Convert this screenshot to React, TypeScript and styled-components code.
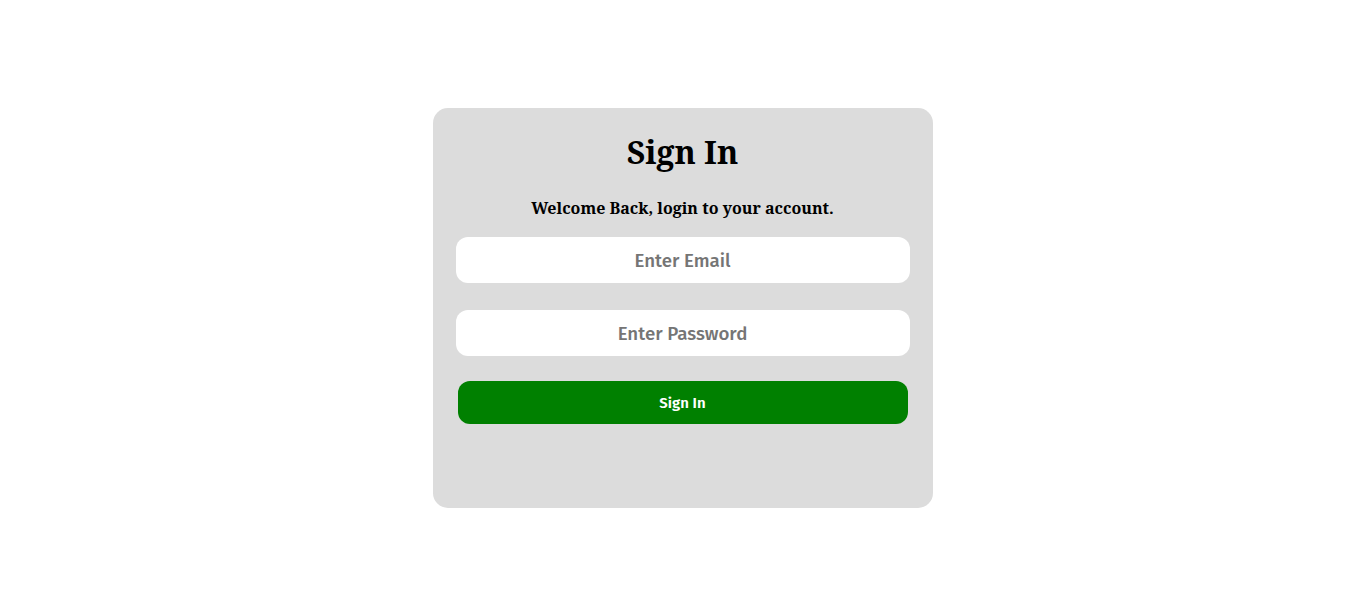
import React from "react";
import styled, { createGlobalStyle } from "styled-components";

const Global = createGlobalStyle`
  html, body { margin: 0; padding: 0; background: #ffffff; }
  body { font-family: "Noto Serif", "DejaVu Serif", serif; }
`;

const Page = styled.div`
  display: flex;
  justify-content: center;
  padding-top: 108px;
  width: 1365px;
  height: 602px;
  box-sizing: border-box;
`;

const Card = styled.form`
  width: 500px;
  height: 400px;
  box-sizing: border-box;
  background: #dcdcdc;
  border-radius: 15px;
  padding: 24px 23px 0;
  display: flex;
  flex-direction: column;
  align-items: stretch;
`;

const Title = styled.h1`
  margin: 0;
  font-family: "Noto Serif", "DejaVu Serif", serif;
  font-size: 32px;
  line-height: 40px;
  font-weight: 700;
  text-align: center;
  color: #000;
`;

const Subtitle = styled.p`
  margin: 24px 0 0;
  font-family: "Noto Serif", "DejaVu Serif", serif;
  font-size: 16px;
  line-height: 24px;
  font-weight: 700;
  text-align: center;
  color: #000;
`;

const Input = styled.input<{ $top: number }>`
  margin-top: ${(p) => p.$top}px;
  height: 46px;
  box-sizing: border-box;
  border: none;
  border-radius: 12px;
  background: #ffffff;
  outline: none;
  text-align: center;
  padding: 2px 0 0;
  font-family: "Fira Sans", "Noto Sans", "Open Sans", sans-serif;
  font-size: 18.7px;
  font-weight: 500;
  &::placeholder { color: #757575; }
`;

const Button = styled.button`
  margin: 25px 2px 0;
  height: 43px;
  padding: 1px 0 0;
  border: none;
  border-radius: 12px;
  background: #008000;
  color: #ffffff;
  font-family: "Fira Sans", "Noto Sans", "Open Sans", sans-serif;
  font-size: 15px;
  font-weight: 600;
  cursor: pointer;
`;

export default function App() {
  return (
    <>
      <Global />
      <Page>
        <Card onSubmit={(e) => e.preventDefault()}>
          <Title>Sign In</Title>
          <Subtitle>Welcome Back, login to your account.</Subtitle>
          <Input $top={17} type="email" placeholder="Enter Email" />
          <Input $top={27} type="password" placeholder="Enter Password" />
          <Button type="submit">Sign In</Button>
        </Card>
      </Page>
    </>
  );
}
